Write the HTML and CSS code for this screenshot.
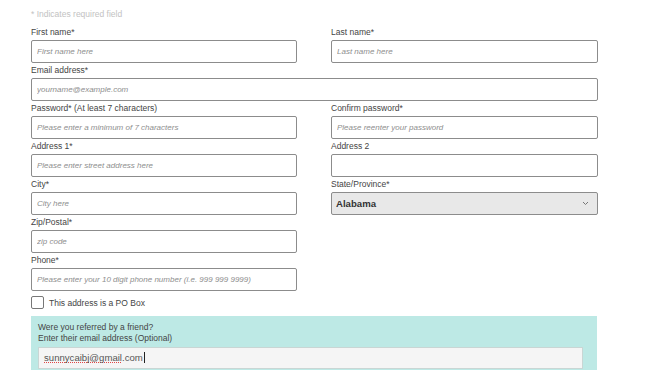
FILE: index.html
```html
<!DOCTYPE html>
<html lang="en">
<head>
<meta charset="utf-8">
<title>Registration</title>
<link rel="stylesheet" href="styles.css">
</head>
<body>
<div class="page">
  <p class="note">* Indicates required field</p>
  <form class="grid">
    <div class="field"><label>First name*</label><input class="box" placeholder="First name here"></div>
    <div class="field"><label>Last name*</label><input class="box" placeholder="Last name here"></div>
    <div class="field full"><label>Email address*</label><input class="box" placeholder="yourname@example.com"></div>
    <div class="field"><label>Password* (At least 7 characters)</label><input class="box" placeholder="Please enter a minimum of 7 characters"></div>
    <div class="field"><label>Confirm password*</label><input class="box" placeholder="Please reenter your password"></div>
    <div class="field"><label>Address 1*</label><input class="box" placeholder="Please enter street address here"></div>
    <div class="field"><label>Address 2</label><input class="box"></div>
    <div class="field"><label>City*</label><input class="box" placeholder="City here"></div>
    <div class="field"><label>State/Province*</label>
      <div class="select box"><span>Alabama</span>
        <svg class="chev" width="7" height="5" viewBox="0 0 7 5"><path d="M1 1l2.5 2.5L6 1" fill="none" stroke="#777" stroke-width="1"/></svg>
      </div>
    </div>
    <div class="field left"><label>Zip/Postal*</label><input class="box" placeholder="zip code"></div>
    <div class="field left"><label>Phone*</label><input class="box" placeholder="Please enter your 10 digit phone number (i.e. 999 999 9999)"></div>
    <div class="check full"><span class="cb"></span><span>This address is a PO Box</span></div>
  </form>
  <div class="referral">
    <p>Were you referred by a friend?<br>Enter their email address (Optional)</p>
    <div class="ref-input"><span class="val"><span class="spell">sunnycaibj@gmail</span>.com<span class="caret"></span></span></div>
  </div>
</div>
</body>
</html>
```
FILE: styles.css
```css
* { box-sizing: border-box; }
html, body { margin: 0; padding: 0; background: #fff; }
body { font-family: "Liberation Sans", Arial, sans-serif; color: #444; overflow: hidden; }
.page { padding: 0 0 0 31px; width: 598px; }
.note { margin: 7px 0 3px; font-size: 8.5px; line-height: 15px; color: #c2c2c2; }
.grid { display: grid; grid-template-columns: 266px 267px; column-gap: 34px; }
.field { display: flex; flex-direction: column; }
.full { grid-column: 1 / 3; }
.left { grid-column: 1; }
.field label { font-size: 8.5px; line-height: 15px; color: #444; }
.box { height: 23px; border: 1px solid #8c8c8c; border-radius: 2px; padding: 0 5px; font-family: "Liberation Sans", Arial, sans-serif; font-size: 8px; background: #fff; outline: none; width: 100%; }
.box::placeholder { color: #8e8e8e; font-style: italic; }
.select { display: flex; align-items: center; justify-content: space-between; background: #e8e8e8; padding: 0 8px 0 4px; }
.select span { font-size: 9.6px; font-weight: bold; color: #333; }
.chev { display: block; }
.check { display: flex; align-items: center; gap: 5px; margin-top: 5px; height: 13px; font-size: 8.5px; color: #444; }
.cb { width: 13px; height: 13px; border: 1px solid #777; border-radius: 2px; background: #fff; }
.referral { margin-top: 7px; background: #bde9e5; padding: 6px 14px 10px 7px; width: 566px; }
.referral p { margin: 0 0 3px; font-size: 8.5px; line-height: 11px; color: #444; }
.ref-input { height: 22px; background: #f5f5f5; border: 1px solid #c9d6d4; display: flex; align-items: center; padding: 0 5px; font-size: 9.6px; color: #555; }
.val { line-height: 12px; white-space: nowrap; }
.spell { background-image: linear-gradient(to right, #e04848 50%, transparent 50%); background-size: 2px 1px; background-repeat: repeat-x; background-position: 0 100%; }
.caret { display: inline-block; width: 1px; height: 11px; background: #222; margin-left: 1px; vertical-align: -2px; }
```
